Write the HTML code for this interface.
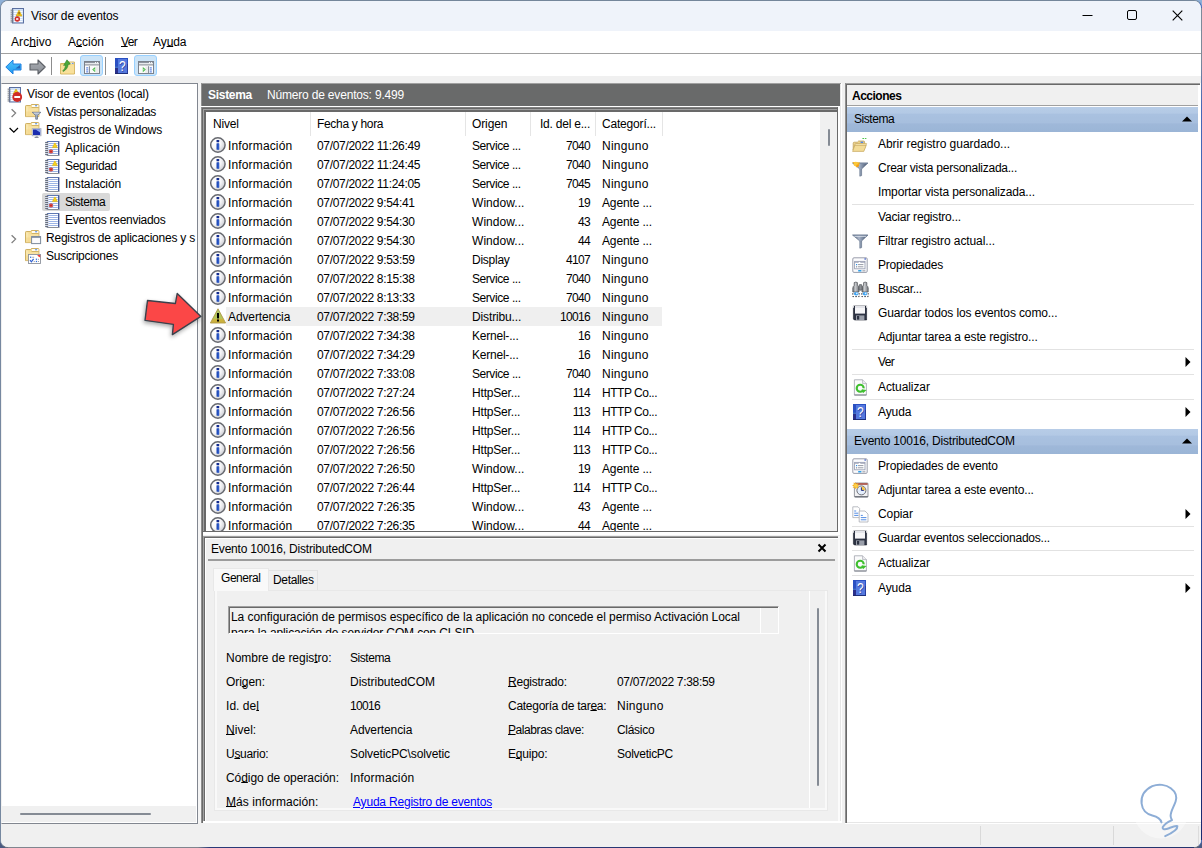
<!DOCTYPE html>
<html lang="es"><head><meta charset="utf-8"><title>Visor de eventos</title>
<style>
*{box-sizing:border-box;margin:0;padding:0}
html,body{width:1202px;height:848px;overflow:hidden;background:linear-gradient(#8eb0d8 0,#8eb0d8 50%,#5a6d8c 50%,#4a5a80 100%)}
body{font-family:"Liberation Sans",sans-serif;font-size:12px;color:#000;position:relative}
.abs{position:absolute}
.t{position:absolute;white-space:nowrap;line-height:16px;height:16px}
#win{position:absolute;left:0;top:0;width:1202px;height:848px;background:#f0f0f0;border:1px solid #74869a;border-left-color:#7688a0;border-bottom-color:#6a6f7c;border-right-color:#3f62b4;border-radius:8px;overflow:hidden}
#win>*{position:absolute}
u{text-decoration:underline;text-underline-offset:0.4px;text-decoration-thickness:1px}
svg{display:block}
.ic{position:absolute}
</style></head><body>

<div id="win">
<div id="root" style="left:-1px;top:-1px;width:1202px;height:848px">
<div class="abs" style="left:0;top:0;width:1202px;height:31px;background:#eff3fa"></div>
<div class="ic" style="left:9px;top:8px"><svg width="16" height="16" viewBox="0 0 16 16" ><rect x="3.5" y="0.5" width="11" height="14.5" fill="#cfe0f7" stroke="#5a6fa0" stroke-width="1"/>
<g stroke="#ffffff" stroke-width="0.9"><path d="M5 3.5H13.5M5 5.5H13.5M5 7.5H13.5M5 9.5H13.5M5 11.5H13.5M5 13.5H13.5"/></g>
<g fill="#7a7f88"><rect x="1.6" y="1.6" width="3" height="1.1"/><rect x="1.6" y="3.6" width="3" height="1.1"/><rect x="1.6" y="5.6" width="3" height="1.1"/><rect x="1.6" y="7.6" width="3" height="1.1"/><rect x="1.6" y="9.6" width="3" height="1.1"/><rect x="1.6" y="11.6" width="3" height="1.1"/><rect x="1.6" y="13.4" width="3" height="1.1"/></g>
<path d="M10 2 L13 8 H7 Z" fill="#f2c21a" stroke="#c79a00" stroke-width="0.5"/><rect x="9.6" y="4" width="0.9" height="2.4" fill="#5a3a10"/>
<circle cx="8.3" cy="11" r="2.7" fill="#cf2a27"/><path d="M7.2 9.9L9.4 12.1M9.4 9.9L7.2 12.1" stroke="#fff" stroke-width="1"/></svg></div>
<div class="t" style="left:31px;top:8px;letter-spacing:-0.104px">Visor de eventos</div>
<svg class="abs" style="left:1080px;top:8px" width="110" height="16" viewBox="0 0 110 16"><path d="M2.5 7.5H12.5" stroke="#000" stroke-width="1"/><rect x="47.5" y="2.5" width="9" height="9" rx="1.5" fill="none" stroke="#000" stroke-width="1"/><path d="M92.7 2.7L102.3 12.3M102.3 2.7L92.7 12.3" stroke="#000" stroke-width="1.15"/></svg>
<div class="abs" style="left:1px;top:31px;width:1200px;height:22px;background:#fff"></div>
<div class="t" style="left:11px;top:34px;letter-spacing:0.083px">Arc<u>h</u>ivo</div>
<div class="t" style="left:68px;top:34px;letter-spacing:-0.005px">A<u>c</u>ción</div>
<div class="t" style="left:121px;top:34px;letter-spacing:-0.672px"><u>V</u>er</div>
<div class="t" style="left:153px;top:34px;letter-spacing:-0.083px">Ay<u>u</u>da</div>
<div class="abs" style="left:1px;top:53px;width:1200px;height:1px;background:#a0a0a0"></div>
<div class="abs" style="left:1px;top:54px;width:1200px;height:22px;background:#fff"></div>
<div class="ic" style="left:5px;top:59px"><svg width="17" height="16" viewBox="0 0 17 16" ><defs><linearGradient id="gb" x1="0" y1="0" x2="0" y2="1"><stop offset="0" stop-color="#4fc3fa"/><stop offset="1" stop-color="#1f9af0"/></linearGradient></defs>
<path d="M0.8 8 L8 1 V5 H16 V11 H8 V15 Z" fill="url(#gb)" stroke="#1f7fe0" stroke-width="1" stroke-linejoin="round"/><path d="M10.5 9.5 L15 6 V9.5 Z" fill="#1b4fa8" opacity="0.75"/></svg></div>
<div class="ic" style="left:29px;top:59px"><svg width="17" height="16" viewBox="0 0 17 16" ><defs><linearGradient id="gf" x1="0" y1="0" x2="0" y2="1"><stop offset="0" stop-color="#a9adb3"/><stop offset="1" stop-color="#8a8e95"/></linearGradient></defs>
<path d="M16.2 8 L9 1 V5 H1 V11 H9 V15 Z" fill="url(#gf)" stroke="#5c6066" stroke-width="1.1" stroke-linejoin="round"/></svg></div>
<div class="abs" style="left:51px;top:57px;width:1px;height:18px;background:#8d8d8d"></div>
<div class="ic" style="left:60px;top:59px"><svg width="16" height="16" viewBox="0 0 16 16" ><path d="M0.6 4.5 H6 L7.2 3 H14.4 V15 H0.6 Z" fill="#f3d27a" stroke="#c9a545" stroke-width="0.8"/><path d="M1 6 H14 V14.6 H1 Z" fill="#f8e09a"/><rect x="9.8" y="3.6" width="4" height="1.6" fill="#fffbe8"/><rect x="11.8" y="3.9" width="1.8" height="0.9" fill="#4a7be0"/>
<path d="M2.6 11.8 C4.4 10.8 5.2 8.6 5.6 6.2 L3.6 6.4 L7 0.8 L10.4 5 L8.2 5.4 C7.8 8.6 6 11.2 3.2 12.4 Z" fill="#4aa83a" stroke="#2f7d26" stroke-width="0.6" stroke-linejoin="round"/></svg></div>
<div class="abs" style="left:80px;top:55px;width:23px;height:21px;background:#cce4f7;border:1px solid #99d1ff;border-radius:3px"></div>
<div class="ic" style="left:84px;top:61px"><svg width="16" height="13" viewBox="0 0 16 13" ><rect x="0.5" y="0.5" width="15" height="12" fill="#fdfdfd" stroke="#7b828c" stroke-width="1"/>
<rect x="1" y="1" width="14" height="1.2" fill="#8d949e"/><rect x="1" y="2.2" width="14" height="1" fill="#e8eaee"/><rect x="1" y="3.4" width="14" height="1" fill="#7b828c"/>
<rect x="11" y="1.1" width="1.1" height="1.1" fill="#fff"/><rect x="13" y="1.1" width="1.1" height="1.1" fill="#fff"/>
<rect x="6" y="5.4" width="8.6" height="6.6" fill="#fafafa"/><rect x="12" y="5.4" width="2.6" height="6.6" fill="#ececec"/><path d="M5.4 5.2 V12" stroke="#7d8590" stroke-width="1"/><rect x="2.2" y="6.4" width="2" height="1" fill="#3f6fe0"/><rect x="2.2" y="8.4" width="2" height="1" fill="#3f6fe0"/><rect x="2.2" y="10.4" width="2" height="1" fill="#3f6fe0"/><path d="M8.2 8.6 L11.2 6 V11.2 Z" fill="#3cb53c"/><path d="M9.4 8.6 L10.6 7.5 V9.7 Z" fill="#d9f2d9"/></svg></div>
<div class="abs" style="left:105px;top:57px;width:1px;height:18px;background:#8d8d8d"></div>
<div class="ic" style="left:115px;top:58px"><svg width="13" height="16" viewBox="0 0 13 16" ><rect x="0" y="0" width="13" height="16" fill="#2a50c2"/><rect x="3" y="1" width="9" height="14" fill="#5478de"/><rect x="0" y="10" width="3" height="6" fill="#2a2f8a"/><rect x="0" y="8.6" width="3" height="1.4" fill="#3f6fc0"/><path d="M0 15.6 H13" stroke="#1c2460" stroke-width="0.8"/><path d="M12.6 6 V15" stroke="#2a3590" stroke-width="0.8"/>
<text x="8" y="13.6" text-anchor="middle" font-family="Liberation Sans, sans-serif" font-size="15.5" fill="#1c2a7a" opacity="0.55" textLength="6.6" lengthAdjust="spacingAndGlyphs">?</text>
<text x="7.4" y="13" text-anchor="middle" font-family="Liberation Sans, sans-serif" font-size="15.5" fill="#ffffff" textLength="6.6" lengthAdjust="spacingAndGlyphs">?</text></svg></div>
<div class="abs" style="left:134px;top:55px;width:23px;height:21px;background:#cce4f7;border:1px solid #99d1ff;border-radius:3px"></div>
<div class="ic" style="left:138px;top:61px"><svg width="16" height="13" viewBox="0 0 16 13" ><rect x="0.5" y="0.5" width="15" height="12" fill="#fdfdfd" stroke="#7b828c" stroke-width="1"/>
<rect x="1" y="1" width="14" height="1.2" fill="#8d949e"/><rect x="1" y="2.2" width="14" height="1" fill="#e8eaee"/><rect x="1" y="3.4" width="14" height="1" fill="#7b828c"/>
<rect x="11" y="1.1" width="1.1" height="1.1" fill="#fff"/><rect x="13" y="1.1" width="1.1" height="1.1" fill="#fff"/>
<rect x="1.4" y="5.4" width="8.6" height="6.6" fill="#fafafa"/><rect x="7.4" y="5.4" width="2.6" height="6.6" fill="#ececec"/><path d="M10.6 5.2 V12" stroke="#7d8590" stroke-width="1"/><rect x="11.8" y="6.4" width="2" height="1" fill="#3f6fe0"/><rect x="11.8" y="8.4" width="2" height="1" fill="#3f6fe0"/><rect x="11.8" y="10.4" width="2" height="1" fill="#3f6fe0"/><path d="M7.8 8.6 L4.8 6 V11.2 Z" fill="#3cb53c"/><path d="M6.6 8.6 L5.4 7.5 V9.7 Z" fill="#d9f2d9"/></svg></div>
<div class="abs" style="left:1px;top:83px;width:197px;height:741px;background:#fff;border:1px solid #828790;border-left:1px solid #f0f0f0"></div>
<div class="abs" style="left:2px;top:84px;width:195px;height:722px;overflow:hidden">
<div class="ic" style="left:5px;top:3px"><svg width="16" height="16" viewBox="0 0 16 16" ><rect x="2.5" y="0.5" width="11" height="14.5" fill="#cfe0f7" stroke="#5a6fa0" stroke-width="1"/>
<g stroke="#ffffff" stroke-width="0.9"><path d="M4 3.5H12.5M4 5.5H12.5M4 7.5H12.5M4 9.5H12.5M4 11.5H12.5M4 13.5H12.5"/></g>
<g fill="#7a7f88"><rect x="0.6" y="1.6" width="3" height="1.1"/><rect x="0.6" y="3.6" width="3" height="1.1"/><rect x="0.6" y="5.6" width="3" height="1.1"/><rect x="0.6" y="7.6" width="3" height="1.1"/><rect x="0.6" y="9.6" width="3" height="1.1"/><rect x="0.6" y="11.6" width="3" height="1.1"/><rect x="0.6" y="13.4" width="3" height="1.1"/></g>
<path d="M9 2 L12 7 H6 Z" fill="#f2c21a" stroke="#c79a00" stroke-width="0.5"/>
<circle cx="10.2" cy="10" r="4.9" fill="#cf2a27"/><rect x="7.3" y="9" width="5.8" height="2" fill="#ffffff"/></svg></div>
<div class="t" style="left:25px;top:2px;letter-spacing:-0.133px">Visor de eventos (local)</div>
<svg class="abs" style="left:7px;top:23px" width="10" height="12" viewBox="0 0 10 12"><path d="M2.6 2.2 L6.6 6.1 L2.6 10" fill="none" stroke="#7e7e7e" stroke-width="1.25"/></svg>
<div class="ic" style="left:23px;top:20px"><svg width="17" height="17" viewBox="0 0 17 17" ><path d="M0.5 2.3 Q0.5 1.5 1.3 1.5 H5.6 L6.4 0.5 H13 Q13.9 0.5 13.9 1.4 V12.6 H0.5 Z" fill="#f5dc94" stroke="#c9a957" stroke-width="0.9" stroke-linejoin="round"/>
<rect x="7" y="1" width="6.4" height="2.2" fill="#fffdf2"/><rect x="10" y="1.2" width="2.2" height="1.1" rx="0.5" fill="#3f7fe8"/><path d="M6.6 3.5 H13.6" stroke="#c9a957" stroke-width="0.8"/>
<rect x="1" y="2.4" width="2.4" height="9.8" fill="#f9e7ae"/><rect x="3.4" y="4.2" width="10" height="8" fill="#f8e2a2"/><rect x="1" y="7.5" width="12.4" height="4.7" fill="#f3d688" opacity="0.55"/><path d="M7.2 8.3 H15.9 L12.5 11.6 V15.2 H10.7 V11.6 Z" fill="#a3afc2" stroke="#66748a" stroke-width="0.8" stroke-linejoin="round"/><path d="M8.6 9.1H14.4" stroke="#e3e9f2" stroke-width="0.8"/></svg></div>
<div class="t" style="left:44px;top:20px;letter-spacing:-0.310px">Vistas personalizadas</div>
<svg class="abs" style="left:6px;top:41px" width="12" height="10" viewBox="0 0 12 10"><path d="M1.6 3 L5.8 7.2 L10 3" fill="none" stroke="#000" stroke-width="1.25"/></svg>
<div class="ic" style="left:23px;top:38px"><svg width="17" height="17" viewBox="0 0 17 17" ><path d="M0.5 2.3 Q0.5 1.5 1.3 1.5 H5.6 L6.4 0.5 H13 Q13.9 0.5 13.9 1.4 V12.6 H0.5 Z" fill="#f5dc94" stroke="#c9a957" stroke-width="0.9" stroke-linejoin="round"/>
<rect x="7" y="1" width="6.4" height="2.2" fill="#fffdf2"/><rect x="10" y="1.2" width="2.2" height="1.1" rx="0.5" fill="#3f7fe8"/><path d="M6.6 3.5 H13.6" stroke="#c9a957" stroke-width="0.8"/>
<rect x="1" y="2.4" width="2.4" height="9.8" fill="#f9e7ae"/><rect x="3.4" y="4.2" width="10" height="8" fill="#f8e2a2"/><rect x="1" y="7.5" width="12.4" height="4.7" fill="#f3d688" opacity="0.55"/><rect x="7.2" y="6.6" width="8.8" height="7.2" fill="#e4e9f4" stroke="#a3abbb" stroke-width="0.8"/><rect x="8" y="7.4" width="7.2" height="5.6" fill="#1a2cae"/><path d="M10.6 7.4 H15.2 V10.6 Z" fill="#8eaaf0"/><path d="M9.6 15.5 H13.6" stroke="#7a8090" stroke-width="0.9"/><path d="M10.6 14.5 H12.8" stroke="#a0a6b3" stroke-width="0.9"/></svg></div>
<div class="t" style="left:44px;top:38px;letter-spacing:-0.170px">Registros de Windows</div>
<div class="ic" style="left:43px;top:57px"><svg width="16" height="16" viewBox="0 0 16 16" ><rect x="2.5" y="0.5" width="11.4" height="14" fill="#ffffff" stroke="#8d95a8" stroke-width="1"/>
<path d="M2.2 0.5 H14" stroke="#5f78b2" stroke-width="1"/><path d="M13.6 0.4 V14.6" stroke="#44589a" stroke-width="1.2"/><path d="M3 14.5 H14" stroke="#8a8e98" stroke-width="1"/>
<g stroke="#9db4e6" stroke-width="1"><path d="M3.4 2.5H12.8M3.4 4.5H12.8M3.4 6.5H12.8M3.4 8.5H12.8M3.4 10.5H12.8M3.4 12.5H12.8"/></g>
<rect x="0.7" y="0.8" width="2" height="13.6" fill="#7f889c"/><g fill="#666d7e"><rect x="0.2" y="1" width="3" height="1"/><rect x="0.2" y="3" width="3" height="1"/><rect x="0.2" y="5" width="3" height="1"/><rect x="0.2" y="7" width="3" height="1"/><rect x="0.2" y="9" width="3" height="1"/><rect x="0.2" y="11" width="3" height="1"/><rect x="0.2" y="13" width="3" height="1"/></g>
<g fill="#d5dae4"><rect x="0.2" y="2" width="2.6" height="1"/><rect x="0.2" y="4" width="2.6" height="1"/><rect x="0.2" y="6" width="2.6" height="1"/><rect x="0.2" y="8" width="2.6" height="1"/><rect x="0.2" y="10" width="2.6" height="1"/><rect x="0.2" y="12" width="2.6" height="1"/></g><path d="M9.6 2.2 Q9.9 1.8 10.2 2.2 L12.4 6.6 H7.4 Z" fill="#f7d21c" stroke="#e0b400" stroke-width="0.5" stroke-linejoin="round"/><path d="M6 8.3 L6.6 9.4 L7.9 9.3 L7.2 10.4 L7.9 11.6 L6.6 11.5 L6 12.6 L5.4 11.5 L4.1 11.6 L4.8 10.4 L4.1 9.3 L5.4 9.4 Z" fill="#cc2a20" stroke="#cc2a20" stroke-width="0.5" stroke-linejoin="round"/></svg></div>
<div class="t" style="left:63px;top:56px;letter-spacing:0.030px">Aplicación</div>
<div class="ic" style="left:43px;top:75px"><svg width="16" height="16" viewBox="0 0 16 16" ><rect x="2.5" y="0.5" width="11.4" height="14" fill="#ffffff" stroke="#8d95a8" stroke-width="1"/>
<path d="M2.2 0.5 H14" stroke="#5f78b2" stroke-width="1"/><path d="M13.6 0.4 V14.6" stroke="#44589a" stroke-width="1.2"/><path d="M3 14.5 H14" stroke="#8a8e98" stroke-width="1"/>
<g stroke="#9db4e6" stroke-width="1"><path d="M3.4 2.5H12.8M3.4 4.5H12.8M3.4 6.5H12.8M3.4 8.5H12.8M3.4 10.5H12.8M3.4 12.5H12.8"/></g>
<rect x="0.7" y="0.8" width="2" height="13.6" fill="#7f889c"/><g fill="#666d7e"><rect x="0.2" y="1" width="3" height="1"/><rect x="0.2" y="3" width="3" height="1"/><rect x="0.2" y="5" width="3" height="1"/><rect x="0.2" y="7" width="3" height="1"/><rect x="0.2" y="9" width="3" height="1"/><rect x="0.2" y="11" width="3" height="1"/><rect x="0.2" y="13" width="3" height="1"/></g>
<g fill="#d5dae4"><rect x="0.2" y="2" width="2.6" height="1"/><rect x="0.2" y="4" width="2.6" height="1"/><rect x="0.2" y="6" width="2.6" height="1"/><rect x="0.2" y="8" width="2.6" height="1"/><rect x="0.2" y="10" width="2.6" height="1"/><rect x="0.2" y="12" width="2.6" height="1"/></g><path d="M9.6 2.2 Q9.9 1.8 10.2 2.2 L12.4 6.6 H7.4 Z" fill="#f7d21c" stroke="#e0b400" stroke-width="0.5" stroke-linejoin="round"/><path d="M6 8.3 L6.6 9.4 L7.9 9.3 L7.2 10.4 L7.9 11.6 L6.6 11.5 L6 12.6 L5.4 11.5 L4.1 11.6 L4.8 10.4 L4.1 9.3 L5.4 9.4 Z" fill="#cc2a20" stroke="#cc2a20" stroke-width="0.5" stroke-linejoin="round"/></svg></div>
<div class="t" style="left:63px;top:74px;letter-spacing:-0.302px">Seguridad</div>
<div class="ic" style="left:43px;top:93px"><svg width="16" height="16" viewBox="0 0 16 16" ><rect x="2.5" y="0.5" width="11.4" height="14" fill="#ffffff" stroke="#8d95a8" stroke-width="1"/>
<path d="M2.2 0.5 H14" stroke="#5f78b2" stroke-width="1"/><path d="M13.6 0.4 V14.6" stroke="#44589a" stroke-width="1.2"/><path d="M3 14.5 H14" stroke="#8a8e98" stroke-width="1"/>
<g stroke="#9db4e6" stroke-width="1"><path d="M3.4 2.5H12.8M3.4 4.5H12.8M3.4 6.5H12.8M3.4 8.5H12.8M3.4 10.5H12.8M3.4 12.5H12.8"/></g>
<rect x="0.7" y="0.8" width="2" height="13.6" fill="#7f889c"/><g fill="#666d7e"><rect x="0.2" y="1" width="3" height="1"/><rect x="0.2" y="3" width="3" height="1"/><rect x="0.2" y="5" width="3" height="1"/><rect x="0.2" y="7" width="3" height="1"/><rect x="0.2" y="9" width="3" height="1"/><rect x="0.2" y="11" width="3" height="1"/><rect x="0.2" y="13" width="3" height="1"/></g>
<g fill="#d5dae4"><rect x="0.2" y="2" width="2.6" height="1"/><rect x="0.2" y="4" width="2.6" height="1"/><rect x="0.2" y="6" width="2.6" height="1"/><rect x="0.2" y="8" width="2.6" height="1"/><rect x="0.2" y="10" width="2.6" height="1"/><rect x="0.2" y="12" width="2.6" height="1"/></g></svg></div>
<div class="t" style="left:63px;top:92px;letter-spacing:-0.125px">Instalación</div>
<div class="abs" style="left:40px;top:109px;width:68px;height:18px;background:#d9d9d9;border-radius:2px"></div>
<div class="ic" style="left:43px;top:111px"><svg width="16" height="16" viewBox="0 0 16 16" ><rect x="2.5" y="0.5" width="11.4" height="14" fill="#ffffff" stroke="#8d95a8" stroke-width="1"/>
<path d="M2.2 0.5 H14" stroke="#5f78b2" stroke-width="1"/><path d="M13.6 0.4 V14.6" stroke="#44589a" stroke-width="1.2"/><path d="M3 14.5 H14" stroke="#8a8e98" stroke-width="1"/>
<g stroke="#9db4e6" stroke-width="1"><path d="M3.4 2.5H12.8M3.4 4.5H12.8M3.4 6.5H12.8M3.4 8.5H12.8M3.4 10.5H12.8M3.4 12.5H12.8"/></g>
<rect x="0.7" y="0.8" width="2" height="13.6" fill="#7f889c"/><g fill="#666d7e"><rect x="0.2" y="1" width="3" height="1"/><rect x="0.2" y="3" width="3" height="1"/><rect x="0.2" y="5" width="3" height="1"/><rect x="0.2" y="7" width="3" height="1"/><rect x="0.2" y="9" width="3" height="1"/><rect x="0.2" y="11" width="3" height="1"/><rect x="0.2" y="13" width="3" height="1"/></g>
<g fill="#d5dae4"><rect x="0.2" y="2" width="2.6" height="1"/><rect x="0.2" y="4" width="2.6" height="1"/><rect x="0.2" y="6" width="2.6" height="1"/><rect x="0.2" y="8" width="2.6" height="1"/><rect x="0.2" y="10" width="2.6" height="1"/><rect x="0.2" y="12" width="2.6" height="1"/></g><path d="M9.6 2.2 Q9.9 1.8 10.2 2.2 L12.4 6.6 H7.4 Z" fill="#f7d21c" stroke="#e0b400" stroke-width="0.5" stroke-linejoin="round"/><path d="M6 8.3 L6.6 9.4 L7.9 9.3 L7.2 10.4 L7.9 11.6 L6.6 11.5 L6 12.6 L5.4 11.5 L4.1 11.6 L4.8 10.4 L4.1 9.3 L5.4 9.4 Z" fill="#cc2a20" stroke="#cc2a20" stroke-width="0.5" stroke-linejoin="round"/></svg></div>
<div class="t" style="left:63px;top:110px;letter-spacing:-0.437px">Sistema</div>
<div class="ic" style="left:43px;top:129px"><svg width="16" height="16" viewBox="0 0 16 16" ><rect x="2.5" y="0.5" width="11.4" height="14" fill="#ffffff" stroke="#8d95a8" stroke-width="1"/>
<path d="M2.2 0.5 H14" stroke="#5f78b2" stroke-width="1"/><path d="M13.6 0.4 V14.6" stroke="#44589a" stroke-width="1.2"/><path d="M3 14.5 H14" stroke="#8a8e98" stroke-width="1"/>
<g stroke="#9db4e6" stroke-width="1"><path d="M3.4 2.5H12.8M3.4 4.5H12.8M3.4 6.5H12.8M3.4 8.5H12.8M3.4 10.5H12.8M3.4 12.5H12.8"/></g>
<rect x="0.7" y="0.8" width="2" height="13.6" fill="#7f889c"/><g fill="#666d7e"><rect x="0.2" y="1" width="3" height="1"/><rect x="0.2" y="3" width="3" height="1"/><rect x="0.2" y="5" width="3" height="1"/><rect x="0.2" y="7" width="3" height="1"/><rect x="0.2" y="9" width="3" height="1"/><rect x="0.2" y="11" width="3" height="1"/><rect x="0.2" y="13" width="3" height="1"/></g>
<g fill="#d5dae4"><rect x="0.2" y="2" width="2.6" height="1"/><rect x="0.2" y="4" width="2.6" height="1"/><rect x="0.2" y="6" width="2.6" height="1"/><rect x="0.2" y="8" width="2.6" height="1"/><rect x="0.2" y="10" width="2.6" height="1"/><rect x="0.2" y="12" width="2.6" height="1"/></g></svg></div>
<div class="t" style="left:63px;top:128px;letter-spacing:-0.273px">Eventos reenviados</div>
<svg class="abs" style="left:7px;top:149px" width="10" height="12" viewBox="0 0 10 12"><path d="M2.6 2.2 L6.6 6.1 L2.6 10" fill="none" stroke="#7e7e7e" stroke-width="1.25"/></svg>
<div class="ic" style="left:23px;top:146px"><svg width="17" height="17" viewBox="0 0 17 17" ><path d="M0.5 2.3 Q0.5 1.5 1.3 1.5 H5.6 L6.4 0.5 H13 Q13.9 0.5 13.9 1.4 V12.6 H0.5 Z" fill="#f5dc94" stroke="#c9a957" stroke-width="0.9" stroke-linejoin="round"/>
<rect x="7" y="1" width="6.4" height="2.2" fill="#fffdf2"/><rect x="10" y="1.2" width="2.2" height="1.1" rx="0.5" fill="#3f7fe8"/><path d="M6.6 3.5 H13.6" stroke="#c9a957" stroke-width="0.8"/>
<rect x="1" y="2.4" width="2.4" height="9.8" fill="#f9e7ae"/><rect x="3.4" y="4.2" width="10" height="8" fill="#f8e2a2"/><rect x="1" y="7.5" width="12.4" height="4.7" fill="#f3d688" opacity="0.55"/><rect x="6.6" y="6.6" width="9" height="7" fill="#f3f4f7" stroke="#7d8a9c" stroke-width="1"/><rect x="6.6" y="6.2" width="9" height="1.6" fill="#7d8a9c"/><rect x="7.6" y="8.2" width="7" height="4.6" fill="#fbfbfc"/></svg></div>
<div class="t" style="left:44px;top:146px;letter-spacing:-0.221px">Registros de aplicaciones y s</div>
<div class="ic" style="left:23px;top:164px"><svg width="17" height="17" viewBox="0 0 17 17" ><path d="M0.5 2.3 Q0.5 1.5 1.3 1.5 H5.6 L6.4 0.5 H13 Q13.9 0.5 13.9 1.4 V12.6 H0.5 Z" fill="#f5dc94" stroke="#c9a957" stroke-width="0.9" stroke-linejoin="round"/>
<rect x="7" y="1" width="6.4" height="2.2" fill="#fffdf2"/><rect x="10" y="1.2" width="2.2" height="1.1" rx="0.5" fill="#3f7fe8"/><path d="M6.6 3.5 H13.6" stroke="#c9a957" stroke-width="0.8"/>
<rect x="1" y="2.4" width="2.4" height="9.8" fill="#f9e7ae"/><rect x="3.4" y="4.2" width="10" height="8" fill="#f8e2a2"/><rect x="1" y="7.5" width="12.4" height="4.7" fill="#f3d688" opacity="0.55"/><rect x="3.5" y="6.5" width="12" height="9" fill="#ffffff" stroke="#8d929c" stroke-width="0.9"/><path d="M12.2 6.9 H15.2 V9.4 Q13.6 9 12.2 6.9 Z" fill="#f0403c"/><g fill="#2f6fe0"><rect x="5" y="8.6" width="1.3" height="1.3"/><rect x="10.8" y="10.6" width="1.3" height="1.3"/><rect x="10.8" y="12.8" width="1.3" height="1.3"/></g><g fill="#9a9fa8"><rect x="7.2" y="8.8" width="2" height="0.9"/><rect x="13" y="10.8" width="1" height="1"/><rect x="13" y="13" width="1" height="1"/><rect x="8.6" y="13" width="1.4" height="0.8"/></g><path d="M5 12.2 L6.4 13.8 L8.6 10.8" fill="none" stroke="#2f5fd0" stroke-width="1.2"/></svg></div>
<div class="t" style="left:44px;top:164px;letter-spacing:-0.208px">Suscripciones</div>
</div>
<div class="abs" style="left:2px;top:806px;width:194px;height:16px;background:#f0f0f0"></div>
<div class="abs" style="left:20px;top:813px;width:131px;height:2px;background:#858b94;border-radius:1px"></div>
<div class="abs" style="left:198px;top:83px;width:3px;height:740px;background:#f5f5f5"></div>
<div class="abs" style="left:201px;top:83px;width:641px;height:740px;background:#f0f0f0"></div>
<div class="abs" style="left:201px;top:83px;width:641px;height:1px;background:#a0a0a0"></div>
<div class="abs" style="left:201px;top:83px;width:1px;height:740px;background:#909090"></div>
<div class="abs" style="left:202px;top:84px;width:1px;height:739px;background:#696969"></div>
<div class="abs" style="left:840px;top:84px;width:1px;height:739px;background:#e6e6e6"></div>
<div class="abs" style="left:841px;top:83px;width:1px;height:740px;background:#ffffff"></div>
<div class="abs" style="left:203px;top:821px;width:639px;height:2px;background:#ffffff"></div>
<div class="abs" style="left:202px;top:84px;width:638px;height:22px;background:#696a6a"></div>
<div class="abs" style="left:201px;top:106px;width:639px;height:1px;background:#ffffff"></div>
<div class="t" style="left:208px;top:87px;color:#fff;font-weight:bold;letter-spacing:-0.290px">Sistema</div>
<div class="t" style="left:267px;top:87px;color:#fff;letter-spacing:-0.184px">Número de eventos: 9.499</div>
<div class="abs" style="left:203px;top:107px;width:637px;height:428px;background:#ffffff"></div>
<div class="abs" style="left:202px;top:107px;width:636px;height:1px;background:#808080"></div>
<div class="abs" style="left:202px;top:108px;width:636px;height:1px;background:#696969"></div>
<div class="abs" style="left:203px;top:109px;width:635px;height:1px;background:#a0a0a0"></div>
<div class="abs" style="left:204px;top:110px;width:634px;height:2px;background:#696969"></div>
<div class="abs" style="left:203px;top:109px;width:1px;height:423px;background:#a0a0a0"></div>
<div class="abs" style="left:204px;top:110px;width:2px;height:422px;background:#696969"></div>
<div class="abs" style="left:837px;top:107px;width:1px;height:425px;background:#696969"></div>
<div class="abs" style="left:203px;top:531px;width:635px;height:1px;background:#696969"></div>
<div class="abs" style="left:206px;top:112px;width:614px;height:419px;overflow:hidden;background:#fff">
<div class="abs" style="left:104px;top:0px;width:1px;height:24px;background:#e5e5e5"></div>
<div class="abs" style="left:259px;top:0px;width:1px;height:24px;background:#e5e5e5"></div>
<div class="abs" style="left:324px;top:0px;width:1px;height:24px;background:#e5e5e5"></div>
<div class="abs" style="left:389px;top:0px;width:1px;height:24px;background:#e5e5e5"></div>
<div class="abs" style="left:456px;top:0px;width:1px;height:24px;background:#e5e5e5"></div>
<div class="t" style="left:7px;top:4px;letter-spacing:-0.174px">Nivel</div>
<div class="t" style="left:111px;top:4px;letter-spacing:-0.321px">Fecha y hora</div>
<div class="t" style="left:266px;top:4px;letter-spacing:-0.122px">Origen</div>
<div class="t" style="left:334px;top:4px;letter-spacing:-0.225px">Id. del e...</div>
<div class="t" style="left:396px;top:4px;letter-spacing:-0.185px">Categorí...</div>
<div class="ic" style="left:4px;top:25px"><svg width="16" height="16" viewBox="0 0 16 16" ><defs><radialGradient id="gi" cx="0.34" cy="0.36" r="0.72"><stop offset="0" stop-color="#ffffff"/><stop offset="0.5" stop-color="#f6f6f8"/><stop offset="0.85" stop-color="#d6d7dc"/><stop offset="1" stop-color="#bfc1c8"/></radialGradient></defs>
<circle cx="7.9" cy="8" r="7.2" fill="url(#gi)" stroke="#686a70" stroke-width="1.45"/>
<rect x="6.5" y="3" width="2.7" height="2.3" rx="0.6" fill="#10298e"/><rect x="6.5" y="6.3" width="2.7" height="6.4" rx="0.4" fill="#1f49b6"/><rect x="7.7" y="6.8" width="1.5" height="5.9" fill="#3a6ad8" opacity="0.55"/></svg></div>
<div class="t" style="left:22px;top:26px;letter-spacing:0.145px">Información</div>
<div class="t" style="left:111px;top:26px;letter-spacing:-0.322px">07/07/2022 11:26:49</div>
<div class="t" style="left:266px;top:26px;letter-spacing:-0.433px">Service ...</div>
<div class="t" style="right:230px;top:26px;letter-spacing:-0.668px">7040</div>
<div class="t" style="left:396px;top:26px;letter-spacing:0.271px">Ninguno</div>
<div class="ic" style="left:4px;top:44px"><svg width="16" height="16" viewBox="0 0 16 16" ><defs><radialGradient id="gi" cx="0.34" cy="0.36" r="0.72"><stop offset="0" stop-color="#ffffff"/><stop offset="0.5" stop-color="#f6f6f8"/><stop offset="0.85" stop-color="#d6d7dc"/><stop offset="1" stop-color="#bfc1c8"/></radialGradient></defs>
<circle cx="7.9" cy="8" r="7.2" fill="url(#gi)" stroke="#686a70" stroke-width="1.45"/>
<rect x="6.5" y="3" width="2.7" height="2.3" rx="0.6" fill="#10298e"/><rect x="6.5" y="6.3" width="2.7" height="6.4" rx="0.4" fill="#1f49b6"/><rect x="7.7" y="6.8" width="1.5" height="5.9" fill="#3a6ad8" opacity="0.55"/></svg></div>
<div class="t" style="left:22px;top:45px;letter-spacing:0.145px">Información</div>
<div class="t" style="left:111px;top:45px;letter-spacing:-0.322px">07/07/2022 11:24:45</div>
<div class="t" style="left:266px;top:45px;letter-spacing:-0.433px">Service ...</div>
<div class="t" style="right:230px;top:45px;letter-spacing:-0.668px">7040</div>
<div class="t" style="left:396px;top:45px;letter-spacing:0.271px">Ninguno</div>
<div class="ic" style="left:4px;top:63px"><svg width="16" height="16" viewBox="0 0 16 16" ><defs><radialGradient id="gi" cx="0.34" cy="0.36" r="0.72"><stop offset="0" stop-color="#ffffff"/><stop offset="0.5" stop-color="#f6f6f8"/><stop offset="0.85" stop-color="#d6d7dc"/><stop offset="1" stop-color="#bfc1c8"/></radialGradient></defs>
<circle cx="7.9" cy="8" r="7.2" fill="url(#gi)" stroke="#686a70" stroke-width="1.45"/>
<rect x="6.5" y="3" width="2.7" height="2.3" rx="0.6" fill="#10298e"/><rect x="6.5" y="6.3" width="2.7" height="6.4" rx="0.4" fill="#1f49b6"/><rect x="7.7" y="6.8" width="1.5" height="5.9" fill="#3a6ad8" opacity="0.55"/></svg></div>
<div class="t" style="left:22px;top:64px;letter-spacing:0.145px">Información</div>
<div class="t" style="left:111px;top:64px;letter-spacing:-0.322px">07/07/2022 11:24:05</div>
<div class="t" style="left:266px;top:64px;letter-spacing:-0.433px">Service ...</div>
<div class="t" style="right:230px;top:64px;letter-spacing:-0.668px">7045</div>
<div class="t" style="left:396px;top:64px;letter-spacing:0.271px">Ninguno</div>
<div class="ic" style="left:4px;top:82px"><svg width="16" height="16" viewBox="0 0 16 16" ><defs><radialGradient id="gi" cx="0.34" cy="0.36" r="0.72"><stop offset="0" stop-color="#ffffff"/><stop offset="0.5" stop-color="#f6f6f8"/><stop offset="0.85" stop-color="#d6d7dc"/><stop offset="1" stop-color="#bfc1c8"/></radialGradient></defs>
<circle cx="7.9" cy="8" r="7.2" fill="url(#gi)" stroke="#686a70" stroke-width="1.45"/>
<rect x="6.5" y="3" width="2.7" height="2.3" rx="0.6" fill="#10298e"/><rect x="6.5" y="6.3" width="2.7" height="6.4" rx="0.4" fill="#1f49b6"/><rect x="7.7" y="6.8" width="1.5" height="5.9" fill="#3a6ad8" opacity="0.55"/></svg></div>
<div class="t" style="left:22px;top:83px;letter-spacing:0.145px">Información</div>
<div class="t" style="left:111px;top:83px;letter-spacing:-0.322px">07/07/2022 9:54:41</div>
<div class="t" style="left:266px;top:83px;letter-spacing:0.052px">Window...</div>
<div class="t" style="right:230px;top:83px;letter-spacing:-0.668px">19</div>
<div class="t" style="left:396px;top:83px;letter-spacing:-0.138px">Agente ...</div>
<div class="ic" style="left:4px;top:101px"><svg width="16" height="16" viewBox="0 0 16 16" ><defs><radialGradient id="gi" cx="0.34" cy="0.36" r="0.72"><stop offset="0" stop-color="#ffffff"/><stop offset="0.5" stop-color="#f6f6f8"/><stop offset="0.85" stop-color="#d6d7dc"/><stop offset="1" stop-color="#bfc1c8"/></radialGradient></defs>
<circle cx="7.9" cy="8" r="7.2" fill="url(#gi)" stroke="#686a70" stroke-width="1.45"/>
<rect x="6.5" y="3" width="2.7" height="2.3" rx="0.6" fill="#10298e"/><rect x="6.5" y="6.3" width="2.7" height="6.4" rx="0.4" fill="#1f49b6"/><rect x="7.7" y="6.8" width="1.5" height="5.9" fill="#3a6ad8" opacity="0.55"/></svg></div>
<div class="t" style="left:22px;top:102px;letter-spacing:0.145px">Información</div>
<div class="t" style="left:111px;top:102px;letter-spacing:-0.322px">07/07/2022 9:54:30</div>
<div class="t" style="left:266px;top:102px;letter-spacing:0.052px">Window...</div>
<div class="t" style="right:230px;top:102px;letter-spacing:-0.668px">43</div>
<div class="t" style="left:396px;top:102px;letter-spacing:-0.138px">Agente ...</div>
<div class="ic" style="left:4px;top:120px"><svg width="16" height="16" viewBox="0 0 16 16" ><defs><radialGradient id="gi" cx="0.34" cy="0.36" r="0.72"><stop offset="0" stop-color="#ffffff"/><stop offset="0.5" stop-color="#f6f6f8"/><stop offset="0.85" stop-color="#d6d7dc"/><stop offset="1" stop-color="#bfc1c8"/></radialGradient></defs>
<circle cx="7.9" cy="8" r="7.2" fill="url(#gi)" stroke="#686a70" stroke-width="1.45"/>
<rect x="6.5" y="3" width="2.7" height="2.3" rx="0.6" fill="#10298e"/><rect x="6.5" y="6.3" width="2.7" height="6.4" rx="0.4" fill="#1f49b6"/><rect x="7.7" y="6.8" width="1.5" height="5.9" fill="#3a6ad8" opacity="0.55"/></svg></div>
<div class="t" style="left:22px;top:121px;letter-spacing:0.145px">Información</div>
<div class="t" style="left:111px;top:121px;letter-spacing:-0.322px">07/07/2022 9:54:30</div>
<div class="t" style="left:266px;top:121px;letter-spacing:0.052px">Window...</div>
<div class="t" style="right:230px;top:121px;letter-spacing:-0.668px">44</div>
<div class="t" style="left:396px;top:121px;letter-spacing:-0.138px">Agente ...</div>
<div class="ic" style="left:4px;top:139px"><svg width="16" height="16" viewBox="0 0 16 16" ><defs><radialGradient id="gi" cx="0.34" cy="0.36" r="0.72"><stop offset="0" stop-color="#ffffff"/><stop offset="0.5" stop-color="#f6f6f8"/><stop offset="0.85" stop-color="#d6d7dc"/><stop offset="1" stop-color="#bfc1c8"/></radialGradient></defs>
<circle cx="7.9" cy="8" r="7.2" fill="url(#gi)" stroke="#686a70" stroke-width="1.45"/>
<rect x="6.5" y="3" width="2.7" height="2.3" rx="0.6" fill="#10298e"/><rect x="6.5" y="6.3" width="2.7" height="6.4" rx="0.4" fill="#1f49b6"/><rect x="7.7" y="6.8" width="1.5" height="5.9" fill="#3a6ad8" opacity="0.55"/></svg></div>
<div class="t" style="left:22px;top:140px;letter-spacing:0.145px">Información</div>
<div class="t" style="left:111px;top:140px;letter-spacing:-0.322px">07/07/2022 9:53:59</div>
<div class="t" style="left:266px;top:140px;letter-spacing:-0.251px">Display</div>
<div class="t" style="right:230px;top:140px;letter-spacing:-0.668px">4107</div>
<div class="t" style="left:396px;top:140px;letter-spacing:0.271px">Ninguno</div>
<div class="ic" style="left:4px;top:158px"><svg width="16" height="16" viewBox="0 0 16 16" ><defs><radialGradient id="gi" cx="0.34" cy="0.36" r="0.72"><stop offset="0" stop-color="#ffffff"/><stop offset="0.5" stop-color="#f6f6f8"/><stop offset="0.85" stop-color="#d6d7dc"/><stop offset="1" stop-color="#bfc1c8"/></radialGradient></defs>
<circle cx="7.9" cy="8" r="7.2" fill="url(#gi)" stroke="#686a70" stroke-width="1.45"/>
<rect x="6.5" y="3" width="2.7" height="2.3" rx="0.6" fill="#10298e"/><rect x="6.5" y="6.3" width="2.7" height="6.4" rx="0.4" fill="#1f49b6"/><rect x="7.7" y="6.8" width="1.5" height="5.9" fill="#3a6ad8" opacity="0.55"/></svg></div>
<div class="t" style="left:22px;top:159px;letter-spacing:0.145px">Información</div>
<div class="t" style="left:111px;top:159px;letter-spacing:-0.322px">07/07/2022 8:15:38</div>
<div class="t" style="left:266px;top:159px;letter-spacing:-0.433px">Service ...</div>
<div class="t" style="right:230px;top:159px;letter-spacing:-0.668px">7040</div>
<div class="t" style="left:396px;top:159px;letter-spacing:0.271px">Ninguno</div>
<div class="ic" style="left:4px;top:177px"><svg width="16" height="16" viewBox="0 0 16 16" ><defs><radialGradient id="gi" cx="0.34" cy="0.36" r="0.72"><stop offset="0" stop-color="#ffffff"/><stop offset="0.5" stop-color="#f6f6f8"/><stop offset="0.85" stop-color="#d6d7dc"/><stop offset="1" stop-color="#bfc1c8"/></radialGradient></defs>
<circle cx="7.9" cy="8" r="7.2" fill="url(#gi)" stroke="#686a70" stroke-width="1.45"/>
<rect x="6.5" y="3" width="2.7" height="2.3" rx="0.6" fill="#10298e"/><rect x="6.5" y="6.3" width="2.7" height="6.4" rx="0.4" fill="#1f49b6"/><rect x="7.7" y="6.8" width="1.5" height="5.9" fill="#3a6ad8" opacity="0.55"/></svg></div>
<div class="t" style="left:22px;top:178px;letter-spacing:0.145px">Información</div>
<div class="t" style="left:111px;top:178px;letter-spacing:-0.322px">07/07/2022 8:13:33</div>
<div class="t" style="left:266px;top:178px;letter-spacing:-0.433px">Service ...</div>
<div class="t" style="right:230px;top:178px;letter-spacing:-0.668px">7040</div>
<div class="t" style="left:396px;top:178px;letter-spacing:0.271px">Ninguno</div>
<div class="abs" style="left:20px;top:195.0px;width:436px;height:19px;background:#efefef"></div>
<div class="ic" style="left:4px;top:196px"><svg width="16" height="16" viewBox="0 0 16 16" ><defs><linearGradient id="gw" x1="0" y1="0" x2="0" y2="1"><stop offset="0" stop-color="#a9c66a"/><stop offset="0.72" stop-color="#b7c558"/><stop offset="0.74" stop-color="#cdb540"/><stop offset="1" stop-color="#c9ae3a"/></linearGradient></defs>
<path d="M8 0.8 L15.6 15 L0.4 15 Z" fill="url(#gw)" stroke="#b09a4a" stroke-width="0.9" stroke-linejoin="round"/>
<rect x="7" y="5" width="2" height="5.4" fill="#000"/><rect x="7" y="11.5" width="2" height="2" fill="#000"/></svg></div>
<div class="t" style="left:22px;top:197px;letter-spacing:-0.107px">Advertencia</div>
<div class="t" style="left:111px;top:197px;letter-spacing:-0.322px">07/07/2022 7:38:59</div>
<div class="t" style="left:266px;top:197px;letter-spacing:-0.135px">Distribu...</div>
<div class="t" style="right:230px;top:197px;letter-spacing:-0.667px">10016</div>
<div class="t" style="left:396px;top:197px;letter-spacing:0.271px">Ninguno</div>
<div class="ic" style="left:4px;top:215px"><svg width="16" height="16" viewBox="0 0 16 16" ><defs><radialGradient id="gi" cx="0.34" cy="0.36" r="0.72"><stop offset="0" stop-color="#ffffff"/><stop offset="0.5" stop-color="#f6f6f8"/><stop offset="0.85" stop-color="#d6d7dc"/><stop offset="1" stop-color="#bfc1c8"/></radialGradient></defs>
<circle cx="7.9" cy="8" r="7.2" fill="url(#gi)" stroke="#686a70" stroke-width="1.45"/>
<rect x="6.5" y="3" width="2.7" height="2.3" rx="0.6" fill="#10298e"/><rect x="6.5" y="6.3" width="2.7" height="6.4" rx="0.4" fill="#1f49b6"/><rect x="7.7" y="6.8" width="1.5" height="5.9" fill="#3a6ad8" opacity="0.55"/></svg></div>
<div class="t" style="left:22px;top:216px;letter-spacing:0.145px">Información</div>
<div class="t" style="left:111px;top:216px;letter-spacing:-0.322px">07/07/2022 7:34:38</div>
<div class="t" style="left:266px;top:216px;letter-spacing:-0.219px">Kernel-...</div>
<div class="t" style="right:230px;top:216px;letter-spacing:-0.668px">16</div>
<div class="t" style="left:396px;top:216px;letter-spacing:0.271px">Ninguno</div>
<div class="ic" style="left:4px;top:234px"><svg width="16" height="16" viewBox="0 0 16 16" ><defs><radialGradient id="gi" cx="0.34" cy="0.36" r="0.72"><stop offset="0" stop-color="#ffffff"/><stop offset="0.5" stop-color="#f6f6f8"/><stop offset="0.85" stop-color="#d6d7dc"/><stop offset="1" stop-color="#bfc1c8"/></radialGradient></defs>
<circle cx="7.9" cy="8" r="7.2" fill="url(#gi)" stroke="#686a70" stroke-width="1.45"/>
<rect x="6.5" y="3" width="2.7" height="2.3" rx="0.6" fill="#10298e"/><rect x="6.5" y="6.3" width="2.7" height="6.4" rx="0.4" fill="#1f49b6"/><rect x="7.7" y="6.8" width="1.5" height="5.9" fill="#3a6ad8" opacity="0.55"/></svg></div>
<div class="t" style="left:22px;top:235px;letter-spacing:0.145px">Información</div>
<div class="t" style="left:111px;top:235px;letter-spacing:-0.322px">07/07/2022 7:34:29</div>
<div class="t" style="left:266px;top:235px;letter-spacing:-0.219px">Kernel-...</div>
<div class="t" style="right:230px;top:235px;letter-spacing:-0.668px">16</div>
<div class="t" style="left:396px;top:235px;letter-spacing:0.271px">Ninguno</div>
<div class="ic" style="left:4px;top:253px"><svg width="16" height="16" viewBox="0 0 16 16" ><defs><radialGradient id="gi" cx="0.34" cy="0.36" r="0.72"><stop offset="0" stop-color="#ffffff"/><stop offset="0.5" stop-color="#f6f6f8"/><stop offset="0.85" stop-color="#d6d7dc"/><stop offset="1" stop-color="#bfc1c8"/></radialGradient></defs>
<circle cx="7.9" cy="8" r="7.2" fill="url(#gi)" stroke="#686a70" stroke-width="1.45"/>
<rect x="6.5" y="3" width="2.7" height="2.3" rx="0.6" fill="#10298e"/><rect x="6.5" y="6.3" width="2.7" height="6.4" rx="0.4" fill="#1f49b6"/><rect x="7.7" y="6.8" width="1.5" height="5.9" fill="#3a6ad8" opacity="0.55"/></svg></div>
<div class="t" style="left:22px;top:254px;letter-spacing:0.145px">Información</div>
<div class="t" style="left:111px;top:254px;letter-spacing:-0.322px">07/07/2022 7:33:08</div>
<div class="t" style="left:266px;top:254px;letter-spacing:-0.433px">Service ...</div>
<div class="t" style="right:230px;top:254px;letter-spacing:-0.668px">7040</div>
<div class="t" style="left:396px;top:254px;letter-spacing:0.271px">Ninguno</div>
<div class="ic" style="left:4px;top:272px"><svg width="16" height="16" viewBox="0 0 16 16" ><defs><radialGradient id="gi" cx="0.34" cy="0.36" r="0.72"><stop offset="0" stop-color="#ffffff"/><stop offset="0.5" stop-color="#f6f6f8"/><stop offset="0.85" stop-color="#d6d7dc"/><stop offset="1" stop-color="#bfc1c8"/></radialGradient></defs>
<circle cx="7.9" cy="8" r="7.2" fill="url(#gi)" stroke="#686a70" stroke-width="1.45"/>
<rect x="6.5" y="3" width="2.7" height="2.3" rx="0.6" fill="#10298e"/><rect x="6.5" y="6.3" width="2.7" height="6.4" rx="0.4" fill="#1f49b6"/><rect x="7.7" y="6.8" width="1.5" height="5.9" fill="#3a6ad8" opacity="0.55"/></svg></div>
<div class="t" style="left:22px;top:273px;letter-spacing:0.145px">Información</div>
<div class="t" style="left:111px;top:273px;letter-spacing:-0.322px">07/07/2022 7:27:24</div>
<div class="t" style="left:266px;top:273px;letter-spacing:-0.183px">HttpSer...</div>
<div class="t" style="right:230px;top:273px;letter-spacing:-0.638px">114</div>
<div class="t" style="left:396px;top:273px;letter-spacing:-0.480px">HTTP Co...</div>
<div class="ic" style="left:4px;top:291px"><svg width="16" height="16" viewBox="0 0 16 16" ><defs><radialGradient id="gi" cx="0.34" cy="0.36" r="0.72"><stop offset="0" stop-color="#ffffff"/><stop offset="0.5" stop-color="#f6f6f8"/><stop offset="0.85" stop-color="#d6d7dc"/><stop offset="1" stop-color="#bfc1c8"/></radialGradient></defs>
<circle cx="7.9" cy="8" r="7.2" fill="url(#gi)" stroke="#686a70" stroke-width="1.45"/>
<rect x="6.5" y="3" width="2.7" height="2.3" rx="0.6" fill="#10298e"/><rect x="6.5" y="6.3" width="2.7" height="6.4" rx="0.4" fill="#1f49b6"/><rect x="7.7" y="6.8" width="1.5" height="5.9" fill="#3a6ad8" opacity="0.55"/></svg></div>
<div class="t" style="left:22px;top:292px;letter-spacing:0.145px">Información</div>
<div class="t" style="left:111px;top:292px;letter-spacing:-0.322px">07/07/2022 7:26:56</div>
<div class="t" style="left:266px;top:292px;letter-spacing:-0.183px">HttpSer...</div>
<div class="t" style="right:230px;top:292px;letter-spacing:-0.638px">113</div>
<div class="t" style="left:396px;top:292px;letter-spacing:-0.480px">HTTP Co...</div>
<div class="ic" style="left:4px;top:310px"><svg width="16" height="16" viewBox="0 0 16 16" ><defs><radialGradient id="gi" cx="0.34" cy="0.36" r="0.72"><stop offset="0" stop-color="#ffffff"/><stop offset="0.5" stop-color="#f6f6f8"/><stop offset="0.85" stop-color="#d6d7dc"/><stop offset="1" stop-color="#bfc1c8"/></radialGradient></defs>
<circle cx="7.9" cy="8" r="7.2" fill="url(#gi)" stroke="#686a70" stroke-width="1.45"/>
<rect x="6.5" y="3" width="2.7" height="2.3" rx="0.6" fill="#10298e"/><rect x="6.5" y="6.3" width="2.7" height="6.4" rx="0.4" fill="#1f49b6"/><rect x="7.7" y="6.8" width="1.5" height="5.9" fill="#3a6ad8" opacity="0.55"/></svg></div>
<div class="t" style="left:22px;top:311px;letter-spacing:0.145px">Información</div>
<div class="t" style="left:111px;top:311px;letter-spacing:-0.322px">07/07/2022 7:26:56</div>
<div class="t" style="left:266px;top:311px;letter-spacing:-0.183px">HttpSer...</div>
<div class="t" style="right:230px;top:311px;letter-spacing:-0.638px">114</div>
<div class="t" style="left:396px;top:311px;letter-spacing:-0.480px">HTTP Co...</div>
<div class="ic" style="left:4px;top:329px"><svg width="16" height="16" viewBox="0 0 16 16" ><defs><radialGradient id="gi" cx="0.34" cy="0.36" r="0.72"><stop offset="0" stop-color="#ffffff"/><stop offset="0.5" stop-color="#f6f6f8"/><stop offset="0.85" stop-color="#d6d7dc"/><stop offset="1" stop-color="#bfc1c8"/></radialGradient></defs>
<circle cx="7.9" cy="8" r="7.2" fill="url(#gi)" stroke="#686a70" stroke-width="1.45"/>
<rect x="6.5" y="3" width="2.7" height="2.3" rx="0.6" fill="#10298e"/><rect x="6.5" y="6.3" width="2.7" height="6.4" rx="0.4" fill="#1f49b6"/><rect x="7.7" y="6.8" width="1.5" height="5.9" fill="#3a6ad8" opacity="0.55"/></svg></div>
<div class="t" style="left:22px;top:330px;letter-spacing:0.145px">Información</div>
<div class="t" style="left:111px;top:330px;letter-spacing:-0.322px">07/07/2022 7:26:56</div>
<div class="t" style="left:266px;top:330px;letter-spacing:-0.183px">HttpSer...</div>
<div class="t" style="right:230px;top:330px;letter-spacing:-0.638px">113</div>
<div class="t" style="left:396px;top:330px;letter-spacing:-0.480px">HTTP Co...</div>
<div class="ic" style="left:4px;top:348px"><svg width="16" height="16" viewBox="0 0 16 16" ><defs><radialGradient id="gi" cx="0.34" cy="0.36" r="0.72"><stop offset="0" stop-color="#ffffff"/><stop offset="0.5" stop-color="#f6f6f8"/><stop offset="0.85" stop-color="#d6d7dc"/><stop offset="1" stop-color="#bfc1c8"/></radialGradient></defs>
<circle cx="7.9" cy="8" r="7.2" fill="url(#gi)" stroke="#686a70" stroke-width="1.45"/>
<rect x="6.5" y="3" width="2.7" height="2.3" rx="0.6" fill="#10298e"/><rect x="6.5" y="6.3" width="2.7" height="6.4" rx="0.4" fill="#1f49b6"/><rect x="7.7" y="6.8" width="1.5" height="5.9" fill="#3a6ad8" opacity="0.55"/></svg></div>
<div class="t" style="left:22px;top:349px;letter-spacing:0.145px">Información</div>
<div class="t" style="left:111px;top:349px;letter-spacing:-0.322px">07/07/2022 7:26:50</div>
<div class="t" style="left:266px;top:349px;letter-spacing:0.052px">Window...</div>
<div class="t" style="right:230px;top:349px;letter-spacing:-0.668px">19</div>
<div class="t" style="left:396px;top:349px;letter-spacing:-0.138px">Agente ...</div>
<div class="ic" style="left:4px;top:367px"><svg width="16" height="16" viewBox="0 0 16 16" ><defs><radialGradient id="gi" cx="0.34" cy="0.36" r="0.72"><stop offset="0" stop-color="#ffffff"/><stop offset="0.5" stop-color="#f6f6f8"/><stop offset="0.85" stop-color="#d6d7dc"/><stop offset="1" stop-color="#bfc1c8"/></radialGradient></defs>
<circle cx="7.9" cy="8" r="7.2" fill="url(#gi)" stroke="#686a70" stroke-width="1.45"/>
<rect x="6.5" y="3" width="2.7" height="2.3" rx="0.6" fill="#10298e"/><rect x="6.5" y="6.3" width="2.7" height="6.4" rx="0.4" fill="#1f49b6"/><rect x="7.7" y="6.8" width="1.5" height="5.9" fill="#3a6ad8" opacity="0.55"/></svg></div>
<div class="t" style="left:22px;top:368px;letter-spacing:0.145px">Información</div>
<div class="t" style="left:111px;top:368px;letter-spacing:-0.322px">07/07/2022 7:26:44</div>
<div class="t" style="left:266px;top:368px;letter-spacing:-0.183px">HttpSer...</div>
<div class="t" style="right:230px;top:368px;letter-spacing:-0.638px">114</div>
<div class="t" style="left:396px;top:368px;letter-spacing:-0.480px">HTTP Co...</div>
<div class="ic" style="left:4px;top:386px"><svg width="16" height="16" viewBox="0 0 16 16" ><defs><radialGradient id="gi" cx="0.34" cy="0.36" r="0.72"><stop offset="0" stop-color="#ffffff"/><stop offset="0.5" stop-color="#f6f6f8"/><stop offset="0.85" stop-color="#d6d7dc"/><stop offset="1" stop-color="#bfc1c8"/></radialGradient></defs>
<circle cx="7.9" cy="8" r="7.2" fill="url(#gi)" stroke="#686a70" stroke-width="1.45"/>
<rect x="6.5" y="3" width="2.7" height="2.3" rx="0.6" fill="#10298e"/><rect x="6.5" y="6.3" width="2.7" height="6.4" rx="0.4" fill="#1f49b6"/><rect x="7.7" y="6.8" width="1.5" height="5.9" fill="#3a6ad8" opacity="0.55"/></svg></div>
<div class="t" style="left:22px;top:387px;letter-spacing:0.145px">Información</div>
<div class="t" style="left:111px;top:387px;letter-spacing:-0.322px">07/07/2022 7:26:35</div>
<div class="t" style="left:266px;top:387px;letter-spacing:0.052px">Window...</div>
<div class="t" style="right:230px;top:387px;letter-spacing:-0.668px">43</div>
<div class="t" style="left:396px;top:387px;letter-spacing:-0.138px">Agente ...</div>
<div class="ic" style="left:4px;top:405px"><svg width="16" height="16" viewBox="0 0 16 16" ><defs><radialGradient id="gi" cx="0.34" cy="0.36" r="0.72"><stop offset="0" stop-color="#ffffff"/><stop offset="0.5" stop-color="#f6f6f8"/><stop offset="0.85" stop-color="#d6d7dc"/><stop offset="1" stop-color="#bfc1c8"/></radialGradient></defs>
<circle cx="7.9" cy="8" r="7.2" fill="url(#gi)" stroke="#686a70" stroke-width="1.45"/>
<rect x="6.5" y="3" width="2.7" height="2.3" rx="0.6" fill="#10298e"/><rect x="6.5" y="6.3" width="2.7" height="6.4" rx="0.4" fill="#1f49b6"/><rect x="7.7" y="6.8" width="1.5" height="5.9" fill="#3a6ad8" opacity="0.55"/></svg></div>
<div class="t" style="left:22px;top:406px;letter-spacing:0.145px">Información</div>
<div class="t" style="left:111px;top:406px;letter-spacing:-0.322px">07/07/2022 7:26:35</div>
<div class="t" style="left:266px;top:406px;letter-spacing:0.052px">Window...</div>
<div class="t" style="right:230px;top:406px;letter-spacing:-0.668px">44</div>
<div class="t" style="left:396px;top:406px;letter-spacing:-0.138px">Agente ...</div>
</div>
<div class="abs" style="left:820px;top:112px;width:17px;height:419px;background:#f0f0f0"></div>
<div class="abs" style="left:828px;top:129px;width:2px;height:17px;background:#858b94;border-radius:1px"></div>
<div class="abs" style="left:203px;top:535px;width:637px;height:286px;background:#f0f0f0"></div>
<div class="abs" style="left:203px;top:536px;width:637px;height:1px;background:#a0a0a0"></div>
<div class="abs" style="left:203px;top:536px;width:1px;height:285px;background:#a0a0a0"></div>
<div class="abs" style="left:204px;top:537px;width:635px;height:1px;background:#696969"></div>
<div class="abs" style="left:204px;top:537px;width:1px;height:284px;background:#696969"></div>
<div class="abs" style="left:205px;top:538px;width:634px;height:1px;background:#ffffff"></div>
<div class="abs" style="left:205px;top:538px;width:1px;height:283px;background:#ffffff"></div>
<div class="abs" style="left:838px;top:536px;width:2px;height:285px;background:#fbfbfb"></div>
<div class="t" style="left:211px;top:541px;letter-spacing:-0.189px">Evento 10016, DistributedCOM</div>
<svg class="abs" style="left:817px;top:543px" width="10" height="10" viewBox="0 0 10 10"><path d="M1.5 1.5L8.5 8.5M8.5 1.5L1.5 8.5" stroke="#000" stroke-width="2"/></svg>
<div class="abs" style="left:208px;top:559px;width:627px;height:2px;background:#9c9c9c"></div>
<div class="abs" style="left:214px;top:590px;width:614px;height:221px;background:#f9f9f9;border:1px solid #e8e8e8"></div>
<div class="abs" style="left:217px;top:591px;width:608px;height:217px;background:#f0f0f0"></div>
<div class="abs" style="left:268px;top:570px;width:50px;height:20px;background:#f0f0f0;border:1px solid #e3e3e3;border-bottom:none"></div>
<div class="abs" style="left:213px;top:568px;width:56px;height:23px;background:#f9f9f9;border:1px solid #e8e8e8;border-bottom:none"></div>
<div class="t" style="left:221px;top:570px;letter-spacing:-0.458px">General</div>
<div class="t" style="left:273px;top:572px;letter-spacing:-0.345px">Detalles</div>
<div class="abs" style="left:809px;top:591px;width:1px;height:217px;background:#fff"></div>
<div class="abs" style="left:817px;top:608px;width:2px;height:178px;background:#858b94;border-radius:1px"></div>
<div class="abs" style="left:228px;top:606px;width:551px;height:28px;border:1px solid #fff;border-top:1px solid #a0a0a0;border-left:1px solid #a0a0a0;background:#f0f0f0;overflow:hidden"><div class="abs" style="left:0;top:0;width:549px;height:26px;border-top:1px solid #696969;border-left:1px solid #696969"></div><div class="abs" style="left:531px;top:1px;width:1px;height:25px;background:#fff"></div><div class="t" style="left:2px;top:2px;letter-spacing:-0.049px">La configuración de permisos específico de la aplicación no concede el permiso Activación Local</div><div class="t" style="left:2px;top:18px;letter-spacing:-0.131px">para la aplicación de servidor COM con CLSID</div></div>
<div class="t" style="left:226px;top:650px;letter-spacing:-0.029px">Nombre de regis<u>t</u>ro:</div>
<div class="t" style="left:350px;top:650px;letter-spacing:-0.437px">Sistema</div>
<div class="t" style="left:226px;top:674px;letter-spacing:-0.051px">Ori<u>g</u>en:</div>
<div class="t" style="left:350px;top:674px;letter-spacing:-0.026px">DistributedCOM</div>
<div class="t" style="left:508px;top:674px;letter-spacing:-0.234px"><u>R</u>egistrado:</div>
<div class="t" style="left:617px;top:674px;letter-spacing:-0.322px">07/07/2022 7:38:59</div>
<div class="t" style="left:226px;top:698px;letter-spacing:0.042px">Id. de<u>l</u></div>
<div class="t" style="left:350px;top:698px;letter-spacing:-0.667px">10016</div>
<div class="t" style="left:508px;top:698px;letter-spacing:-0.269px">Categoría de tar<u>e</u>a:</div>
<div class="t" style="left:617px;top:698px;letter-spacing:0.271px">Ninguno</div>
<div class="t" style="left:226px;top:722px;letter-spacing:0.031px"><u>N</u>ivel:</div>
<div class="t" style="left:350px;top:722px;letter-spacing:-0.107px">Advertencia</div>
<div class="t" style="left:508px;top:722px;letter-spacing:-0.416px"><u>P</u>alabras clave:</div>
<div class="t" style="left:617px;top:722px;letter-spacing:-0.294px">Clásico</div>
<div class="t" style="left:226px;top:746px;letter-spacing:-0.298px">U<u>s</u>uario:</div>
<div class="t" style="left:350px;top:746px;letter-spacing:-0.108px">SolveticPC\solvetic</div>
<div class="t" style="left:508px;top:746px;letter-spacing:-0.172px">E<u>q</u>uipo:</div>
<div class="t" style="left:617px;top:746px;letter-spacing:-0.269px">SolveticPC</div>
<div class="t" style="left:226px;top:770px;letter-spacing:-0.055px">Có<u>d</u>igo de operación:</div>
<div class="t" style="left:350px;top:770px;letter-spacing:0.145px">Información</div>
<div class="t" style="left:226px;top:794px;letter-spacing:0.058px"><u>M</u>ás información:</div>
<div class="t" style="left:353px;top:794px;color:#0000ff;text-decoration:underline;letter-spacing:-0.195px">Ayuda Registro de eventos</div>
<div class="abs" style="left:845px;top:83px;width:356px;height:740px;background:#ffffff"></div>
<div class="abs" style="left:845px;top:83px;width:355px;height:1px;background:#a0a0a0"></div>
<div class="abs" style="left:845px;top:83px;width:1px;height:740px;background:#909090"></div>
<div class="abs" style="left:846px;top:84px;width:354px;height:1px;background:#696969"></div>
<div class="abs" style="left:846px;top:84px;width:1px;height:739px;background:#696969"></div>
<div class="abs" style="left:847px;top:822px;width:354px;height:1px;background:#e6e6e6"></div>
<div class="abs" style="left:845px;top:823px;width:356px;height:1px;background:#ffffff"></div>
<div class="abs" style="left:847px;top:85px;width:351px;height:20px;background:#f0f0f0"></div>
<div class="abs" style="left:847px;top:105px;width:351px;height:1px;background:#a0a0a0"></div>
<div class="t" style="left:852px;top:88px;font-weight:bold;letter-spacing:-0.495px">Acciones</div>
<div class="abs" style="left:847px;top:106px;width:352px;height:1px;background:#ffffff"></div>
<div class="abs" style="left:847px;top:107px;width:351px;height:25px;background:linear-gradient(#b7cce7 0,#b3c9e5 24%,#a9c1e0 30%,#a7bfde 62%,#9fb8d9 68%,#9bb5d6 100%)"></div>
<div class="t" style="left:854px;top:111px;letter-spacing:-0.437px">Sistema</div>
<svg class="abs" style="left:1182px;top:116px" width="10" height="6" viewBox="0 0 10 6"><path d="M0 5.5 L5 0.5 L10 5.5 Z" fill="#000"/></svg>
<div class="ic" style="left:852px;top:138px"><svg width="16" height="16" viewBox="0 0 16 16" ><path d="M1.2 5.2 Q1.2 4.2 2.2 4.2 H5.4 L6.6 3 H11.6 Q12.6 3 12.6 4 V6 H4 L1.2 12 Z" fill="#ecd28a" stroke="#b99a52" stroke-width="0.7" stroke-linejoin="round"/>
<path d="M3.4 5.6 H14.6 L12.2 11.6 H1 Z" fill="#f8e7b0" stroke="#c6a85e" stroke-width="0.7" stroke-linejoin="round"/>
<path d="M2.8 7.4 H14.2 L11.8 13.4 H0.6 Z" fill="#f3dc98" stroke="#c6a85e" stroke-width="0.7" stroke-linejoin="round"/>
<rect x="8.6" y="3.6" width="2.6" height="1.4" fill="#4f86ea"/><path d="M10.4 0.5 H14.4" stroke="#3cbf3c" stroke-width="0.9" stroke-dasharray="1.8 0.8"/></svg></div>
<div class="t" style="left:878px;top:136px;letter-spacing:-0.028px">Abrir registro guardado...</div>
<div class="ic" style="left:852px;top:161px"><svg width="17" height="16" viewBox="0 0 17 16" ><defs><linearGradient id="gfu2" x1="0" y1="0" x2="1" y2="0"><stop offset="0" stop-color="#4f5f78"/><stop offset="0.42" stop-color="#aab5c8"/><stop offset="0.6" stop-color="#8593aa"/><stop offset="1" stop-color="#47566f"/></linearGradient></defs>
<path d="M0.5 2 H16 L9.6 8 V14.6 L7.8 15.2 V8 Z" fill="url(#gfu2)" stroke="#56667f" stroke-width="0.6" stroke-linejoin="round"/><path d="M7 2.2 H15.6" stroke="#7d8ba3" stroke-width="1.1"/>
<path d="M0.4 1 L8 1.4 L6.4 5.4 L4.6 6.6 Z" fill="#f7b21c"/><circle cx="3.8" cy="3" r="2.3" fill="#fbc73a"/><circle cx="5.6" cy="4.6" r="1.2" fill="#f39a1a"/></svg></div>
<div class="t" style="left:878px;top:160px;letter-spacing:-0.253px">Crear vista personalizada...</div>
<div class="t" style="left:878px;top:184px;letter-spacing:-0.121px">Importar vista personalizada...</div>
<div class="abs" style="left:852px;top:204px;width:342px;height:1px;background:#e2e2e2"></div>
<div class="t" style="left:878px;top:209px;letter-spacing:-0.194px">Vaciar registro...</div>
<div class="ic" style="left:852px;top:233px"><svg width="17" height="16" viewBox="0 0 17 16" ><defs><linearGradient id="gfu" x1="0" y1="0" x2="1" y2="0"><stop offset="0" stop-color="#4f5f78"/><stop offset="0.42" stop-color="#aab5c8"/><stop offset="0.6" stop-color="#8593aa"/><stop offset="1" stop-color="#47566f"/></linearGradient></defs>
<path d="M0.5 2 H16 L9.6 8 V14.6 L7.8 15.2 V8 Z" fill="url(#gfu)" stroke="#56667f" stroke-width="0.6" stroke-linejoin="round"/><path d="M1 2.2 H15.6" stroke="#7d8ba3" stroke-width="1.1"/><path d="M2.4 3.4 H14" stroke="#dfe6f0" stroke-width="0.8"/></svg></div>
<div class="t" style="left:878px;top:233px;letter-spacing:-0.091px">Filtrar registro actual...</div>
<div class="ic" style="left:852px;top:257px"><svg width="16" height="16" viewBox="0 0 16 16" ><rect x="0.8" y="0.8" width="14.4" height="14.6" rx="1.2" fill="#fbfbfd" stroke="#8e93a3" stroke-width="0.9"/>
<rect x="12.4" y="1.4" width="1.6" height="1.2" fill="#3f5fc8"/>
<rect x="2.6" y="4.4" width="10.4" height="7.4" fill="#ffffff" stroke="#9aa0b4" stroke-width="0.9"/><path d="M2.6 5.4 H6.4 V4.4 M8.6 4.4 V5.4 H13" fill="none" stroke="#9aa0b4" stroke-width="0.8"/>
<g stroke="#8a8f9c" stroke-width="0.9"><path d="M6 7.6H11.4M6 9.8H11.4"/></g><rect x="4" y="7" width="1.2" height="1.2" fill="#2f8fe8"/><rect x="4" y="9.3" width="1.2" height="1.1" fill="#7a8090"/>
<rect x="6.2" y="13" width="3.2" height="1.5" fill="#2f9fe8"/><rect x="10.4" y="13" width="3" height="1.5" fill="#b5b8c0"/></svg></div>
<div class="t" style="left:878px;top:257px;letter-spacing:-0.217px">Propiedades</div>
<div class="ic" style="left:852px;top:281px"><svg width="17" height="17" viewBox="0 0 17 17" ><defs><linearGradient id="gbn" x1="0" y1="0" x2="1" y2="0"><stop offset="0" stop-color="#6a6d72"/><stop offset="0.4" stop-color="#c9cbce"/><stop offset="1" stop-color="#75787d"/></linearGradient></defs>
<g fill="url(#gbn)" stroke="#4a4d52" stroke-width="0.7"><path d="M0.8 11 V7 Q1.2 5 2.2 4.4 V1.6 Q3.8 0.6 5.4 1.6 V4.4 Q6.8 5 7 7 V11 Z"/><path d="M10 11 V7 Q10.2 5 11.6 4.4 V1.6 Q13.2 0.6 14.8 1.6 V4.4 Q15.8 5 16.2 7 V11 Z"/></g>
<rect x="7" y="3.6" width="3" height="5.6" rx="0.8" fill="#8a8d92" stroke="#4a4d52" stroke-width="0.6"/>
<g fill="#3aa0f0"><ellipse cx="4.2" cy="12.8" rx="2.3" ry="1.8"/><ellipse cx="13" cy="12.8" rx="2.3" ry="1.8"/></g><g fill="#d4ecff"><circle cx="4.8" cy="12.4" r="0.9"/><circle cx="13.6" cy="12.4" r="0.9"/></g>
<path d="M0.8 12 V15.6 H7.2 V12 M9.8 12 V15.6 H16.2 V12" fill="none" stroke="#2a2d33" stroke-width="0.8" stroke-dasharray="1.8 1.2"/></svg></div>
<div class="t" style="left:878px;top:281px;letter-spacing:-0.332px">Buscar...</div>
<div class="ic" style="left:852px;top:305px"><svg width="16" height="16" viewBox="0 0 16 16" ><path d="M1.4 1 H14.6 V15 H2.4 L1.4 14 Z" fill="#2c3242" stroke="#1b1f2b" stroke-width="0.6"/><rect x="3" y="1" width="10" height="7.6" fill="#f6f6f8"/><rect x="3" y="1" width="10" height="2" fill="#e4e5ea"/><rect x="4" y="10.4" width="8.4" height="4.6" fill="#9a9faa"/><rect x="5" y="11" width="2.2" height="3.6" fill="#2c3242"/><rect x="0.8" y="1.2" width="1.2" height="1.4" fill="#fff"/><rect x="14" y="1.2" width="1.2" height="1.4" fill="#fff"/></svg></div>
<div class="t" style="left:878px;top:305px;letter-spacing:-0.119px">Guardar todos los eventos como...</div>
<div class="t" style="left:878px;top:329px;letter-spacing:-0.157px">Adjuntar tarea a este registro...</div>
<div class="abs" style="left:852px;top:349px;width:342px;height:1px;background:#e2e2e2"></div>
<div class="t" style="left:878px;top:354px;letter-spacing:-0.672px">Ver</div>
<svg class="abs" style="left:1185px;top:357px" width="6" height="10" viewBox="0 0 6 10"><path d="M0.5 0 L5.5 5 L0.5 10 Z" fill="#000"/></svg>
<div class="abs" style="left:852px;top:374px;width:342px;height:1px;background:#e2e2e2"></div>
<div class="ic" style="left:852px;top:379px"><svg width="16" height="17" viewBox="0 0 16 17" ><path d="M2.4 0.8 H10.6 L14.4 4.6 V16 H2.4 Z" fill="#fbfbfc" stroke="#a9acb3" stroke-width="0.9"/><path d="M10.6 0.8 V4.6 H14.4" fill="#ededf0" stroke="#a9acb3" stroke-width="0.7"/><path d="M2.4 16 H14.4" stroke="#7d828c" stroke-width="1"/>
<circle cx="8.2" cy="9.2" r="3.5" fill="none" stroke="#3fbf2f" stroke-width="2.1"/><path d="M8.4 9 L13.8 9.4 L13.6 13.2 Z" fill="#fbfbfc"/><path d="M9.6 10.2 L14.6 11 L11 14.2 Z" fill="#3fbf2f"/></svg></div>
<div class="t" style="left:878px;top:379px;letter-spacing:-0.089px">Actualizar</div>
<div class="abs" style="left:852px;top:399px;width:342px;height:1px;background:#e2e2e2"></div>
<div class="ic" style="left:853px;top:404px"><svg width="13" height="16" viewBox="0 0 13 16" ><rect x="0" y="0" width="13" height="16" fill="#2a50c2"/><rect x="3" y="1" width="9" height="14" fill="#5478de"/><rect x="0" y="10" width="3" height="6" fill="#2a2f8a"/><rect x="0" y="8.6" width="3" height="1.4" fill="#3f6fc0"/><path d="M0 15.6 H13" stroke="#1c2460" stroke-width="0.8"/><path d="M12.6 6 V15" stroke="#2a3590" stroke-width="0.8"/>
<text x="8" y="13.6" text-anchor="middle" font-family="Liberation Sans, sans-serif" font-size="15.5" fill="#1c2a7a" opacity="0.55" textLength="6.6" lengthAdjust="spacingAndGlyphs">?</text>
<text x="7.4" y="13" text-anchor="middle" font-family="Liberation Sans, sans-serif" font-size="15.5" fill="#ffffff" textLength="6.6" lengthAdjust="spacingAndGlyphs">?</text></svg></div>
<div class="t" style="left:878px;top:404px;letter-spacing:-0.083px">Ayuda</div>
<svg class="abs" style="left:1185px;top:407px" width="6" height="10" viewBox="0 0 6 10"><path d="M0.5 0 L5.5 5 L0.5 10 Z" fill="#000"/></svg>
<div class="abs" style="left:847px;top:429px;width:351px;height:25px;background:linear-gradient(#b7cce7 0,#b3c9e5 24%,#a9c1e0 30%,#a7bfde 62%,#9fb8d9 68%,#9bb5d6 100%)"></div>
<div class="t" style="left:854px;top:433px;letter-spacing:-0.189px">Evento 10016, DistributedCOM</div>
<svg class="abs" style="left:1182px;top:438px" width="10" height="6" viewBox="0 0 10 6"><path d="M0 5.5 L5 0.5 L10 5.5 Z" fill="#000"/></svg>
<div class="ic" style="left:852px;top:458px"><svg width="16" height="16" viewBox="0 0 16 16" ><rect x="0.8" y="0.8" width="14.4" height="14.6" rx="1.2" fill="#fbfbfd" stroke="#8e93a3" stroke-width="0.9"/>
<rect x="12.4" y="1.4" width="1.6" height="1.2" fill="#3f5fc8"/>
<rect x="2.6" y="4.4" width="10.4" height="7.4" fill="#ffffff" stroke="#9aa0b4" stroke-width="0.9"/><path d="M2.6 5.4 H6.4 V4.4 M8.6 4.4 V5.4 H13" fill="none" stroke="#9aa0b4" stroke-width="0.8"/>
<g stroke="#8a8f9c" stroke-width="0.9"><path d="M6 7.6H11.4M6 9.8H11.4"/></g><rect x="4" y="7" width="1.2" height="1.2" fill="#2f8fe8"/><rect x="4" y="9.3" width="1.2" height="1.1" fill="#7a8090"/>
<rect x="6.2" y="13" width="3.2" height="1.5" fill="#2f9fe8"/><rect x="10.4" y="13" width="3" height="1.5" fill="#b5b8c0"/></svg></div>
<div class="t" style="left:878px;top:458px;letter-spacing:-0.178px">Propiedades de evento</div>
<div class="ic" style="left:852px;top:482px"><svg width="17" height="16" viewBox="0 0 17 16" ><rect x="2.4" y="1" width="13.6" height="14.2" rx="0.8" fill="#f2f2f4" stroke="#8a8d95" stroke-width="0.9"/><rect x="2.8" y="1.2" width="12.8" height="1.6" fill="#a84a3c"/><path d="M2.6 14.6 H16" stroke="#6f737c" stroke-width="1.1"/>
<circle cx="9.4" cy="8.4" r="4.5" fill="#e4eefc" stroke="#6d7078" stroke-width="1"/><path d="M9.4 8.4 L9.4 4.6 A3.8 3.8 0 0 1 13.2 8.4 Z" fill="#f5c54a"/><path d="M9.4 5.4 V8.4 H11.8" fill="none" stroke="#1c2d8a" stroke-width="1"/>
<path d="M3.6 0 L4.4 2 L6.6 1 L5.6 3 L7.6 3.8 L5.6 4.6 L6.4 6.8 L4.4 5.6 L3.4 7.6 L2.8 5.4 L0.6 6 L1.8 4.2 L0 3.2 L2 2.6 L1.4 0.6 L3.2 1.6 Z" fill="#f8b21e"/><circle cx="3.8" cy="3.6" r="1.8" fill="#fcd04a"/></svg></div>
<div class="t" style="left:878px;top:482px;letter-spacing:-0.161px">Adjuntar tarea a este evento...</div>
<div class="ic" style="left:852px;top:506px"><svg width="17" height="17" viewBox="0 0 17 17" ><path d="M0.8 0.8 H6 L7.6 2.4 V11.6 H0.8 Z" fill="#ffffff" stroke="#a9acb4" stroke-width="0.8"/><g stroke="#3f7fe0" stroke-width="0.9"><path d="M2.2 5H4.2M2.2 7.2H6.4M2.2 9.4H6.4"/></g>
<path d="M7.2 5 H13 L16 8 V16 H7.2 Z" fill="#ffffff" stroke="#a9acb4" stroke-width="0.8"/><g stroke="#3f7fe0" stroke-width="0.9"><path d="M8.8 9.4H10.8M8.8 11.6H14.4M8.8 13.8H14.4"/></g></svg></div>
<div class="t" style="left:878px;top:506px;letter-spacing:-0.093px">Copiar</div>
<svg class="abs" style="left:1185px;top:509px" width="6" height="10" viewBox="0 0 6 10"><path d="M0.5 0 L5.5 5 L0.5 10 Z" fill="#000"/></svg>
<div class="abs" style="left:852px;top:526px;width:342px;height:1px;background:#e2e2e2"></div>
<div class="ic" style="left:852px;top:530px"><svg width="16" height="16" viewBox="0 0 16 16" ><path d="M1.4 1 H14.6 V15 H2.4 L1.4 14 Z" fill="#2c3242" stroke="#1b1f2b" stroke-width="0.6"/><rect x="3" y="1" width="10" height="7.6" fill="#f6f6f8"/><rect x="3" y="1" width="10" height="2" fill="#e4e5ea"/><rect x="4" y="10.4" width="8.4" height="4.6" fill="#9a9faa"/><rect x="5" y="11" width="2.2" height="3.6" fill="#2c3242"/><rect x="0.8" y="1.2" width="1.2" height="1.4" fill="#fff"/><rect x="14" y="1.2" width="1.2" height="1.4" fill="#fff"/></svg></div>
<div class="t" style="left:878px;top:530px;letter-spacing:-0.212px">Guardar eventos seleccionados...</div>
<div class="abs" style="left:852px;top:550px;width:342px;height:1px;background:#e2e2e2"></div>
<div class="ic" style="left:852px;top:555px"><svg width="16" height="17" viewBox="0 0 16 17" ><path d="M2.4 0.8 H10.6 L14.4 4.6 V16 H2.4 Z" fill="#fbfbfc" stroke="#a9acb3" stroke-width="0.9"/><path d="M10.6 0.8 V4.6 H14.4" fill="#ededf0" stroke="#a9acb3" stroke-width="0.7"/><path d="M2.4 16 H14.4" stroke="#7d828c" stroke-width="1"/>
<circle cx="8.2" cy="9.2" r="3.5" fill="none" stroke="#3fbf2f" stroke-width="2.1"/><path d="M8.4 9 L13.8 9.4 L13.6 13.2 Z" fill="#fbfbfc"/><path d="M9.6 10.2 L14.6 11 L11 14.2 Z" fill="#3fbf2f"/></svg></div>
<div class="t" style="left:878px;top:555px;letter-spacing:-0.089px">Actualizar</div>
<div class="abs" style="left:852px;top:575px;width:342px;height:1px;background:#e2e2e2"></div>
<div class="ic" style="left:853px;top:580px"><svg width="13" height="16" viewBox="0 0 13 16" ><rect x="0" y="0" width="13" height="16" fill="#2a50c2"/><rect x="3" y="1" width="9" height="14" fill="#5478de"/><rect x="0" y="10" width="3" height="6" fill="#2a2f8a"/><rect x="0" y="8.6" width="3" height="1.4" fill="#3f6fc0"/><path d="M0 15.6 H13" stroke="#1c2460" stroke-width="0.8"/><path d="M12.6 6 V15" stroke="#2a3590" stroke-width="0.8"/>
<text x="8" y="13.6" text-anchor="middle" font-family="Liberation Sans, sans-serif" font-size="15.5" fill="#1c2a7a" opacity="0.55" textLength="6.6" lengthAdjust="spacingAndGlyphs">?</text>
<text x="7.4" y="13" text-anchor="middle" font-family="Liberation Sans, sans-serif" font-size="15.5" fill="#ffffff" textLength="6.6" lengthAdjust="spacingAndGlyphs">?</text></svg></div>
<div class="t" style="left:878px;top:580px;letter-spacing:-0.083px">Ayuda</div>
<svg class="abs" style="left:1185px;top:583px" width="6" height="10" viewBox="0 0 6 10"><path d="M0.5 0 L5.5 5 L0.5 10 Z" fill="#000"/></svg>
<div class="abs" style="left:1px;top:824px;width:1200px;height:23px;background:#f0f0f0"></div>
<div class="abs" style="left:980px;top:826px;width:1px;height:19px;background:#d9d9d9"></div>
<div class="abs" style="left:1113px;top:826px;width:1px;height:19px;background:#d9d9d9"></div>
<div class="abs" style="left:1198px;top:826px;width:1px;height:19px;background:#dcdcdc"></div>
<svg class="abs" style="left:1122px;top:770px" width="80" height="78" viewBox="1122 770 80 78"><circle cx="1161" cy="811" r="27.5" fill="#ffffff" opacity="0.42"/><path d="M1161.5 822.4 C1160.8 819.5 1158.5 817 1152.3 815.5 C1146.5 814 1142.3 809.5 1141.6 803.5 C1140.8 796 1144.5 790 1152.3 786.2 C1158.5 783.6 1166 784.6 1170.8 788.2 C1175.2 791.5 1177.2 796.5 1175.6 801.5 C1174 806.5 1170.4 811.5 1170.6 816 C1170.8 818.2 1171.6 819.4 1172 820.2 C1169 821.5 1164.5 824.3 1162.8 827 C1162 829.6 1165 829.8 1169 828.2 C1172.5 826.8 1175.5 825.4 1177.4 826.2 C1177.8 829 1174.5 832 1165.2 836.2" fill="none" stroke="#8dadd6" stroke-width="2" stroke-linecap="round" stroke-linejoin="round"/></svg>
<svg class="abs" style="left:135px;top:282px;overflow:visible" width="80" height="64" viewBox="135 282 80 64"><defs><filter id="sh" x="-20%" y="-20%" width="150%" height="150%"><feGaussianBlur in="SourceAlpha" stdDeviation="2"/><feOffset dx="-1" dy="2"/><feComponentTransfer><feFuncA type="linear" slope="0.35"/></feComponentTransfer><feMerge><feMergeNode/><feMergeNode in="SourceGraphic"/></feMerge></filter></defs><path d="M147.5 300.5 L175.4 303.5 L177.2 293.5 L200.9 316.4 L172.4 334.6 L173.4 324.4 L145 320.4 Z" fill="#fb4747" stroke="#3b414b" stroke-width="1.4" stroke-linejoin="round" filter="url(#sh)"/></svg>
</div></div>
<div class="abs" style="left:1201px;top:8px;width:1px;height:832px;background:linear-gradient(#7c8a9a 0,#7c8a9a 6%,#4468b8 12%,#3a5cb0 50%,#1f3380 80%,#1a2a70 100%)"></div>
<div class="abs" style="left:8px;top:847px;width:1186px;height:1px;background:linear-gradient(90deg,#80858f 0,#80858f 16%,#2a3a78 17%,#25346e 100%)"></div>
</body></html>
